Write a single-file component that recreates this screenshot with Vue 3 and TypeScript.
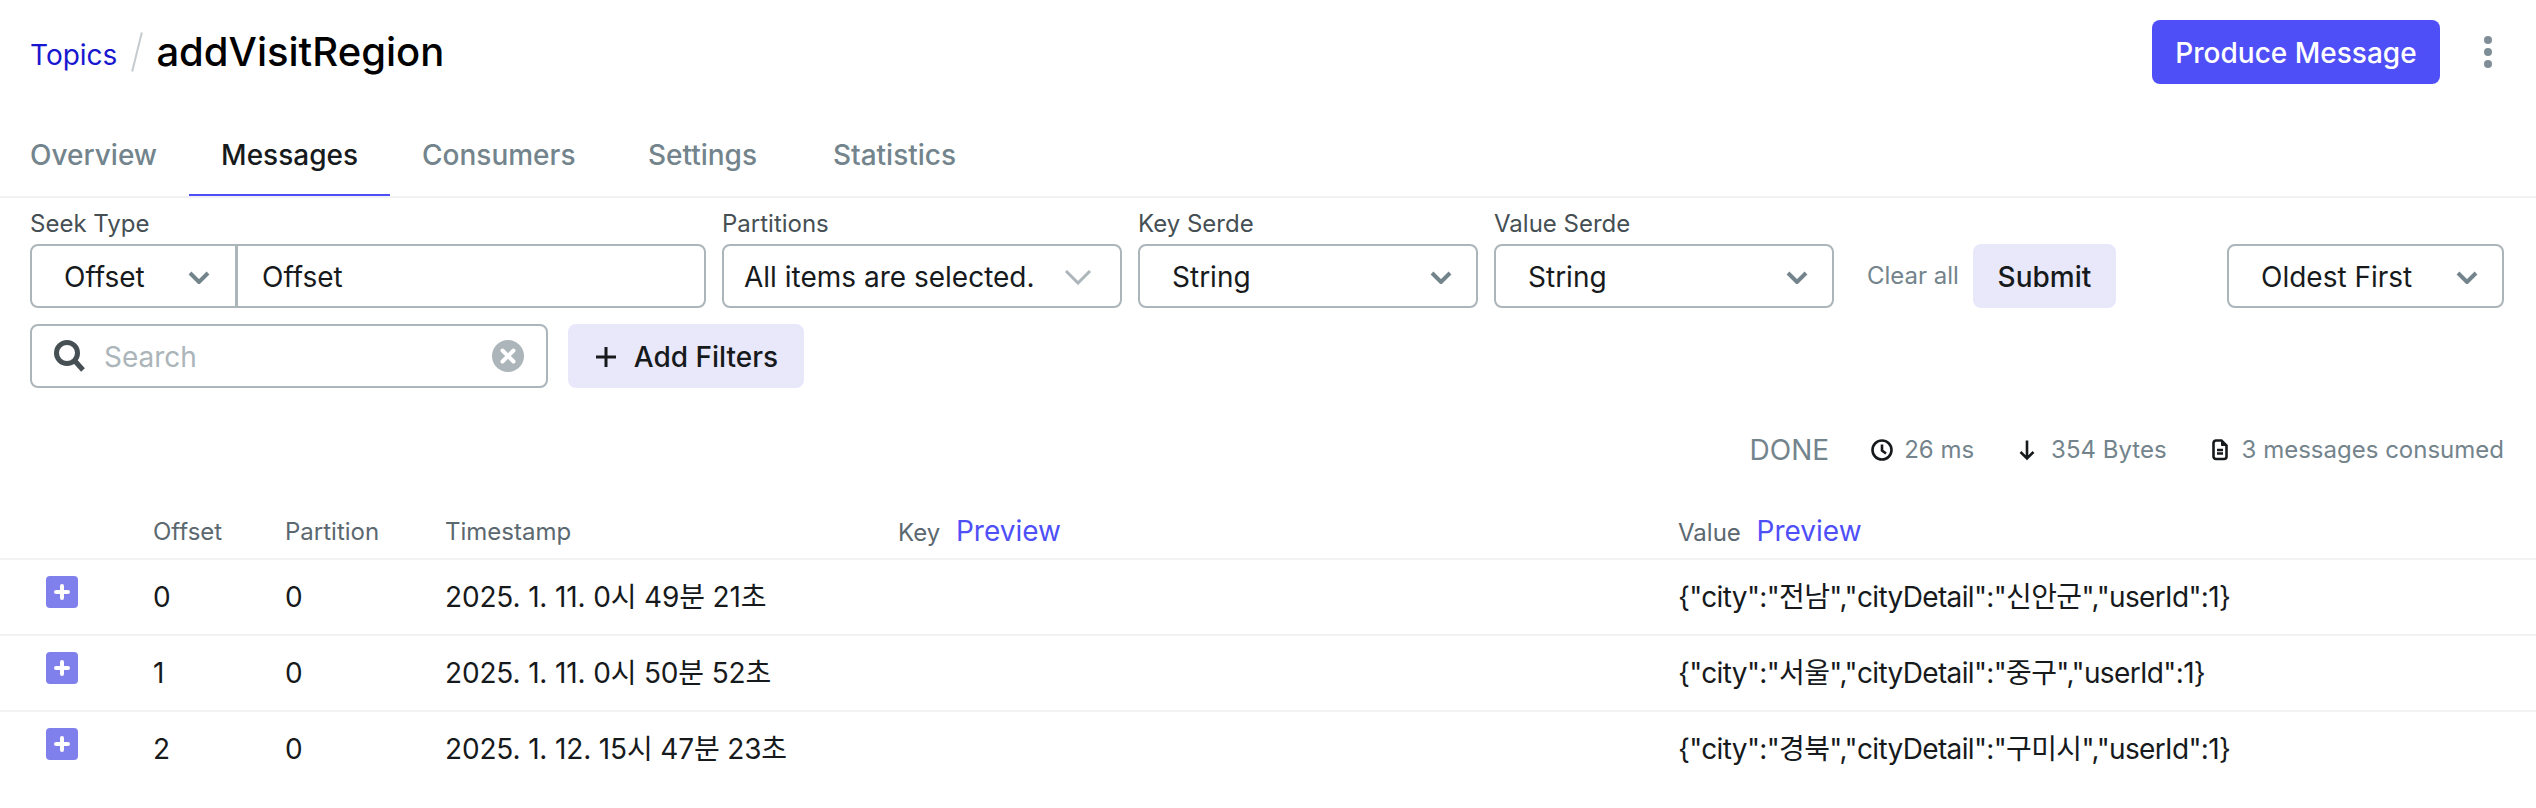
<script setup lang="ts">
interface Row { offset: number; partition: number; timestamp: string; value: string }
const tabs: string[] = ['Overview', 'Messages', 'Consumers', 'Settings', 'Statistics']
const rows: Row[] = [
  { offset: 0, partition: 0, timestamp: '2025. 1. 11. 0시 49분 21초', value: '{"city":"전남","cityDetail":"신안군","userId":1}' },
  { offset: 1, partition: 0, timestamp: '2025. 1. 11. 0시 50분 52초', value: '{"city":"서울","cityDetail":"중구","userId":1}' },
  { offset: 2, partition: 0, timestamp: '2025. 1. 12. 15시 47분 23초', value: '{"city":"경북","cityDetail":"구미시","userId":1}' },
]
</script>

<template>
  <div class="page">
    <header class="top">
      <div class="crumbs">
        <a class="crumb-link">Topics</a>
        <span class="crumb-sep"></span>
        <h1 class="title">addVisitRegion</h1>
      </div>
      <div class="top-actions">
        <button class="btn primary">Produce Message</button>
        <svg class="kebab" width="8" height="32" viewBox="0 0 8 32"><circle cx="4" cy="4" r="4" /><circle cx="4" cy="16" r="4" /><circle cx="4" cy="28" r="4" /></svg>
      </div>
    </header>

    <nav class="tabs">
      <a v-for="t in tabs" :key="t" class="tab" :class="{ active: t === 'Messages' }">{{ t }}</a>
    </nav>

    <section class="filters">
      <div class="filter-row">
        <div class="field seek">
          <label class="lbl">Seek Type</label>
          <div class="box seek-box">
            <div class="seek-select">
              <span>Offset</span>
              <svg class="chev" width="22" height="13" viewBox="0 0 22 13"><path d="M2 2l9 9 9-9" /></svg>
            </div>
            <div class="seek-input">Offset</div>
          </div>
        </div>
        <div class="field partitions">
          <label class="lbl">Partitions</label>
          <div class="box part-box">
            <span>All items are selected.</span>
            <svg class="chev-lg" width="28" height="16" viewBox="0 0 28 16"><path d="M2 2l12 12L26 2" /></svg>
          </div>
        </div>
        <div class="field serde">
          <label class="lbl">Key Serde</label>
          <div class="box select">
            <span>String</span>
            <svg class="chev" width="22" height="13" viewBox="0 0 22 13"><path d="M2 2l9 9 9-9" /></svg>
          </div>
        </div>
        <div class="field serde">
          <label class="lbl">Value Serde</label>
          <div class="box select">
            <span>String</span>
            <svg class="chev" width="22" height="13" viewBox="0 0 22 13"><path d="M2 2l9 9 9-9" /></svg>
          </div>
        </div>
        <div class="submit-group">
          <span class="clear">Clear all</span>
          <button class="btn secondary submit">Submit</button>
        </div>
        <div class="box select order">
          <span>Oldest First</span>
          <svg class="chev" width="22" height="13" viewBox="0 0 22 13"><path d="M2 2l9 9 9-9" /></svg>
        </div>
      </div>
      <div class="search-row">
        <div class="box search">
          <svg class="search-ico" width="32" height="32" viewBox="0 0 32 32"><circle cx="13" cy="13" r="10.5" /><path d="M20.5 20.5L29 30" /></svg>
          <span class="placeholder">Search</span>
          <svg class="clear-ico" width="32" height="32" viewBox="0 0 32 32"><circle cx="16" cy="16" r="16" /><path d="M10.5 10.5l11 11M21.5 10.5l-11 11" /></svg>
        </div>
        <button class="btn secondary add">
          <svg class="plus-ico" width="24" height="24" viewBox="0 0 24 24"><path d="M12 2v20M2 12h20" /></svg>
          Add Filters
        </button>
      </div>
    </section>

    <section class="stats">
      <span class="done">DONE</span>
      <span class="stat clock">
        <svg width="22" height="22" viewBox="0 0 22 22"><circle cx="11" cy="11" r="9.500" /><path d="M11 5.500V11.500L15 14.500" /></svg>
        26 ms
      </span>
      <span class="stat arrow">
        <svg width="16" height="22" viewBox="0 0 16 22"><path d="M8 1.500V19.500M1.500 13l6.500 6.500 6.500-6.500" /></svg>
        354 Bytes
      </span>
      <span class="stat doc">
        <svg width="16" height="22" viewBox="0 0 16 22"><path d="M1.500 4a2.500 2.500 0 0 1 2.500-2.500h5.500l5 5V17.500a2.500 2.500 0 0 1-2.500 2.500H4a2.500 2.500 0 0 1-2.500-2.500z" /><path class="fold" d="M9.500 1.500v5h5z" /><path d="M5 11h6M5 14.500h6" /></svg>
        3 messages consumed
      </span>
    </section>

    <table class="grid">
      <colgroup>
        <col class="c-exp" /><col class="c-off" /><col class="c-par" /><col class="c-ts" /><col class="c-key" /><col />
      </colgroup>
      <thead>
        <tr>
          <th></th>
          <th>Offset</th>
          <th>Partition</th>
          <th>Timestamp</th>
          <th>Key <a class="preview">Preview</a></th>
          <th>Value <a class="preview">Preview</a></th>
        </tr>
      </thead>
      <tbody>
        <tr v-for="r in rows" :key="r.offset">
          <td class="exp-cell">
            <span class="expander">
              <svg width="16" height="16" viewBox="0 0 16 16"><path d="M8 2v12M2 8h12" /></svg>
            </span>
          </td>
          <td>{{ r.offset }}</td>
          <td>{{ r.partition }}</td>
          <td class="ts">{{ r.timestamp }}</td>
          <td></td>
          <td class="val">{{ r.value }}</td>
        </tr>
      </tbody>
    </table>
  </div>
</template>

<style scoped>
.page {
  width: 2536px;
  height: 808px;
  overflow: hidden;
  background: #fff;
  color: #171a1c;
  font-family: Inter, "Noto Sans CJK KR", sans-serif;
  font-size: 28px;
  line-height: 40px;
}
.top {
  display: flex;
  align-items: center;
  justify-content: space-between;
  height: 104px;
  padding: 0 44px 0 30px;
}
.crumbs { display: flex; align-items: center; }
.crumb-link { color: #1717cf; font-size: 28px; margin-top: 6px; }
.crumb-sep {
  width: 2px;
  height: 40px;
  margin: 0 18px 0 19px;
  background: #c4cbcf;
  transform: rotate(14deg);
}
.title { margin: 0; font-size: 40px; line-height: 56px; font-weight: 500; color: #000; }
.top-actions { display: flex; align-items: center; gap: 44px; }
.btn {
  border: 0;
  border-radius: 8px;
  font-family: inherit;
  font-size: 28px;
  font-weight: 500;
  display: inline-flex;
  align-items: center;
  justify-content: center;
  height: 64px;
  padding: 2px 0 0;
}
.primary { width: 288px; background: #4f4ff7; color: #fff; }
.secondary { background: #e9e8fa; color: #171a1c; }
.kebab { fill: #7e8e96; }

.tabs {
  display: flex;
  height: 94px;
  padding-top: 12px;
  box-sizing: border-box;
  border-bottom: 2px solid #f1f2f3;
}
.tab {
  box-sizing: border-box;
  min-width: 190px;
  height: 80px;
  padding: 0 32px;
  margin-bottom: -2px;
  display: flex;
  align-items: center;
  justify-content: center;
  font-weight: 500;
  color: #73848c;
  border-bottom: 2px solid transparent;
}
.tab:first-child { margin-left: -2px; }
.tab:last-child { margin-left: 2px; }
.tab.active { color: #171a1c; border-bottom-color: #4f4ff7; }

.filters { padding: 10px 32px 0 30px; }
.filter-row { display: flex; align-items: flex-end; }
.field { display: flex; flex-direction: column; gap: 4px; }
.lbl { font-size: 24px; line-height: 32px; color: #454f54; }
.box {
  box-sizing: border-box;
  height: 64px;
  padding-top: 2px;
  border: 2px solid #abb5ba;
  border-radius: 8px;
  display: flex;
  align-items: center;
  background: #fff;
}
.seek { width: 676px; margin-right: 16px; }
.seek-box { width: 676px; padding-top: 0; }
.seek-select {
  box-sizing: border-box;
  width: 206px;
  height: 100%;
  padding: 2px 25px 0 32px;
  display: flex;
  align-items: center;
  justify-content: space-between;
  border-right: 3px solid #abb5ba;
}
.seek-input { padding: 2px 0 0 24px; }
.partitions { width: 400px; margin-right: 16px; }
.part-box { padding: 2px 28px 0 20px; justify-content: space-between; }
.serde { width: 340px; margin-right: 16px; }
.select { padding: 2px 24px 0 32px; justify-content: space-between; }
.chev { flex: none; fill: none; stroke: #73848c; stroke-width: 4; }
.chev-lg { flex: none; fill: none; stroke: #abb5ba; stroke-width: 3; }
.submit-group { display: flex; align-items: center; gap: 14px; margin-left: 17px; }
.clear { font-size: 24px; color: #73848c; }
.submit { width: 143px; }
.order { width: 277px; margin-left: auto; }

.search-row { display: flex; gap: 20px; margin-top: 16px; }
.search { width: 518px; padding: 0 22px 0 22px; gap: 18px; }
.search-ico { flex: none; fill: none; stroke: #454f54; stroke-width: 5; }
.placeholder { flex: 1; color: #abb5ba; padding-top: 2px; }
.clear-ico { flex: none; }
.clear-ico circle { fill: #abb5ba; }
.clear-ico path { stroke: #fff; stroke-width: 4; stroke-linecap: round; }
.add { width: 236px; height: 64px; gap: 16px; }
.plus-ico { fill: none; stroke: #171a1c; stroke-width: 3; }

.stats {
  display: flex;
  align-items: center;
  justify-content: flex-end;
  height: 40px;
  margin-top: 42px;
  padding-right: 32px;
  font-size: 24px;
  color: #73848c;
}
.done { font-size: 28px; margin-right: 42px; }
.stat { display: inline-flex; align-items: center; gap: 11px; }
.stat.arrow { margin-left: 45px; gap: 16px; }
.stat.doc { margin-left: 45px; gap: 14px; }
.stat svg { flex: none; fill: none; stroke: #171a1c; stroke-width: 2.6; }
.stat svg .fold { fill: #171a1c; stroke-width: 1; }

.grid {
  width: 2536px;
  table-layout: fixed;
  border-collapse: collapse;
  margin-top: 36px;
}
.c-exp { width: 153px; }
.c-off { width: 132px; }
.c-par { width: 160px; }
.c-ts { width: 453px; }
.c-key { width: 780px; }
th {
  height: 51px;
  text-align: left;
  font-size: 24px;
  font-weight: 400;
  color: #5b6870;
  border-bottom: 2px solid #f1f2f3;
  padding: 0 0 1px;
}
.preview { color: #4f4ff7; font-size: 28px; margin-left: 9px; }
td {
  padding: 0;
  height: 74px;
  vertical-align: middle;
  border-top: 2px solid #f1f2f3;
}
tbody tr:first-child td { border-top: 0; }
.ts { letter-spacing: -0.15px; }
.val { letter-spacing: -0.65px; }
.exp-cell { padding-left: 46px; vertical-align: top; padding-top: 16px; height: 58px; }
.expander {
  width: 32px;
  height: 32px;
  border-radius: 4px;
  background: #8080ec;
  display: flex;
  align-items: center;
  justify-content: center;
}
.expander svg { fill: none; stroke: #fff; stroke-width: 4; stroke-linecap: round; }
</style>
